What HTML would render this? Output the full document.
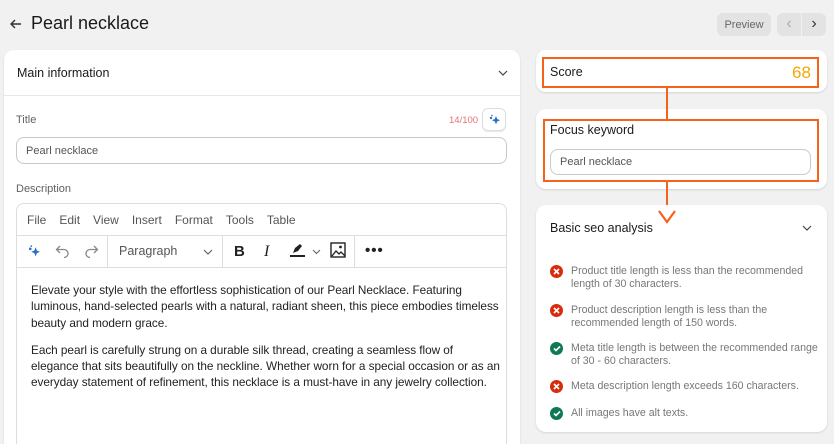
<!DOCTYPE html>
<html style="width:834px;height:444px;overflow:hidden"><head><style>
*{box-sizing:border-box;margin:0;padding:0}
body{width:834px;height:444px;overflow:hidden;background:#f1f1f1;font-family:"Liberation Sans",Arial,sans-serif;color:#303030;position:relative}
.abs{position:absolute}
.card{position:absolute;background:#fff;border-radius:10px;box-shadow:0 1px 2px rgba(0,0,0,.12)}
.lbl{font-size:11px;color:#616161}
.inp{position:absolute;border:1px solid #c9c9c9;border-radius:8px;font-size:11px;color:#555;padding-left:9px;display:flex;align-items:center}
.menu span{margin-right:13px}
.li{position:absolute;left:14px;display:flex;font-size:10.6px;color:#777;line-height:13px;white-space:nowrap}
.ic{width:13px;height:13px;border-radius:50%;flex:none;margin-right:8px;display:flex;align-items:center;justify-content:center}
.x{background:#d72c0d}.ok{background:#0e7a52}
</style></head><body>
<svg class="abs" style="left:9px;top:17px" width="14" height="14" viewBox="0 0 14 14"><path d="M12 7H2M6 3L2 7l4 4" stroke="#303030" stroke-width="1.4" fill="none"/></svg>
<div class="abs" style="left:31px;top:13px;font-size:18px;color:#1a1a1a">Pearl necklace</div>
<div class="abs" style="left:717px;top:13px;width:54px;height:23px;background:#e3e3e3;border-radius:6px;font-size:11px;color:#666;display:flex;align-items:center;justify-content:center">Preview</div>
<div class="abs" style="left:777px;top:13px;width:24px;height:23px;background:#e3e3e3;border-radius:6px 0 0 6px;color:#aaa;font-size:16px;text-align:center;line-height:21px">‹</div>
<div class="abs" style="left:802px;top:13px;width:24px;height:23px;background:#e3e3e3;border-radius:0 6px 6px 0;color:#333;font-size:16px;text-align:center;line-height:21px">›</div>

<div class="card" style="left:4px;top:50px;width:516px;height:394px;overflow:hidden;border-radius:10px 10px 0 0">
 <div class="abs" style="left:13px;top:16px;font-size:12.5px;color:#1a1a1a">Main information</div>
 <svg class="abs" style="left:494px;top:20px" width="10" height="6"><path d="M1 1l4 4 4-4" stroke="#444" fill="none" stroke-width="1.2"/></svg>
 <div class="abs" style="left:0;top:45px;width:516px;height:1px;background:#e8e8e8"></div>
 <div class="abs lbl" style="left:12px;top:64px">Title</div>
 <div class="abs" style="left:445px;top:65px;font-size:9.5px;color:#e57373">14/100</div>
 <div class="abs" style="left:478px;top:58px;width:24px;height:23px;border:1px solid #ddd;border-radius:6px;box-shadow:0 1px 1px rgba(0,0,0,.1)"><svg style="position:absolute;left:5px;top:5px" width="13" height="13" viewBox="0 0 13 13"><path d="M8 2l1.2 3L12 6.3 9.2 7.5 8 10.5 6.8 7.5 4 6.3 6.8 5z" fill="#2c6ecb"/><circle cx="3" cy="4" r="1.2" fill="#2c6ecb"/><circle cx="4" cy="1.5" r=".8" fill="#2c6ecb"/></svg></div>
 <div class="inp" style="left:12px;top:87px;width:491px;height:27px">Pearl necklace</div>
 <div class="abs lbl" style="left:12px;top:133px">Description</div>
 <div class="abs" style="left:12px;top:153px;width:491px;height:300px;border:1px solid #ddd;border-radius:8px">
  <div class="abs menu" style="left:10px;top:9px;font-size:12px;color:#555"><span>File</span><span>Edit</span><span>View</span><span>Insert</span><span>Format</span><span>Tools</span><span>Table</span></div>
  <div class="abs" style="left:0;top:31px;width:489px;height:1px;background:#ddd"></div>
  <div class="abs" style="left:0;top:63px;width:489px;height:1px;background:#ddd"></div>
  <div class="abs" style="left:90px;top:32px;width:1px;height:31px;background:#ddd"></div>
  <div class="abs" style="left:205px;top:32px;width:1px;height:31px;background:#ddd"></div>
  <div class="abs" style="left:337px;top:32px;width:1px;height:31px;background:#ddd"></div>
  <svg class="abs" style="left:10px;top:40px" width="14" height="14" viewBox="0 0 13 13"><path d="M8 3l1.2 3L12 7.3 9.2 8.5 8 11.5 6.8 8.5 4 7.3 6.8 6z" fill="#2c6ecb"/><circle cx="3" cy="4.5" r="1.2" fill="#2c6ecb"/><circle cx="4" cy="2" r=".8" fill="#2c6ecb"/></svg>
  <svg class="abs" style="left:38px;top:40px" width="16" height="16" viewBox="0 0 16 16"><path d="M5 2L1.5 5.5 5 9M1.5 5.5H9a4 4 0 010 8" stroke="#888" stroke-width="1.3" fill="none"/></svg>
  <svg class="abs" style="left:66px;top:40px" width="16" height="16" viewBox="0 0 16 16"><path d="M11 2l3.5 3.5L11 9M14.5 5.5H7a4 4 0 000 8" stroke="#888" stroke-width="1.3" fill="none"/></svg>
  <div class="abs" style="left:102px;top:40px;font-size:12.5px;color:#555">Paragraph</div>
  <svg class="abs" style="left:186px;top:45px" width="10" height="6"><path d="M1 1l4 4 4-4" stroke="#666" fill="none" stroke-width="1.2"/></svg>
  <div class="abs" style="left:217px;top:39px;font-size:15px;font-weight:bold;color:#222">B</div>
  <div class="abs" style="left:247px;top:39px;font-size:16px;font-style:italic;font-family:'Liberation Serif',serif;color:#222">I</div>
  <svg class="abs" style="left:272px;top:38px" width="16" height="16" viewBox="0 0 16 16"><path d="M4 11l2-5 5-4 2 2-4 5z" fill="#222"/><rect x="1" y="13" width="15" height="2" fill="#222"/></svg>
  <svg class="abs" style="left:295px;top:45px" width="9" height="6"><path d="M1 1l3.5 3.5L8 1" stroke="#666" fill="none" stroke-width="1.1"/></svg>
  <svg class="abs" style="left:313px;top:38px" width="16" height="16" viewBox="0 0 16 16"><rect x="1" y="1" width="14" height="14" fill="none" stroke="#222" stroke-width="1.4"/><path d="M2 14l4-5 3 3 2-2 4 4" stroke="#222" fill="none" stroke-width="1.3"/><circle cx="10.5" cy="5" r="1.4" fill="#222"/></svg>
  <div class="abs" style="left:348px;top:41px;font-size:15px;font-weight:bold;color:#222;letter-spacing:1px;line-height:12px">•••</div>
  <div class="abs" style="left:14px;top:78px;width:470px;font-size:11.8px;line-height:16.3px;color:#222;letter-spacing:-0.05px">
   <p style="margin-bottom:11px">Elevate your style with the effortless sophistication of our Pearl Necklace. Featuring luminous, hand-selected pearls with a natural, radiant sheen, this piece embodies timeless beauty and modern grace.</p>
   <p>Each pearl is carefully strung on a durable silk thread, creating a seamless flow of elegance that sits beautifully on the neckline. Whether worn for a special occasion or as an everyday statement of refinement, this necklace is a must-have in any jewelry collection.</p>
  </div>
 </div>
</div>

<div class="card" style="left:536px;top:50px;width:291px;height:42px"></div>
<div class="abs" style="left:542px;top:57px;width:277px;height:31px;border:2px solid #f5631b"></div>
<div class="abs" style="left:550px;top:65px;font-size:12.5px;color:#1a1a1a">Score</div>
<div class="abs" style="left:792px;top:63px;font-size:17px;color:#f5a800">68</div>

<div class="card" style="left:536px;top:109px;width:291px;height:80px"></div>
<div class="abs" style="left:543px;top:119px;width:276px;height:63px;border:2px solid #f5631b"></div>
<div class="abs" style="left:550px;top:123px;font-size:12.5px;color:#1a1a1a">Focus keyword</div>
<div class="inp" style="left:550px;top:149px;width:261px;height:26px;background:#fff">Pearl necklace</div>

<div class="abs" style="left:666px;top:88px;width:2px;height:31px;background:#f5631b"></div>
<div class="abs" style="left:666px;top:182px;width:2px;height:42px;background:#f5631b"></div>

<div class="card" style="left:536px;top:205px;width:291px;height:227px">
 <div class="abs" style="left:14px;top:16px;font-size:12.5px;color:#1a1a1a">Basic seo analysis</div>
 <svg class="abs" style="left:266px;top:20px" width="10" height="6"><path d="M1 1l4 4 4-4" stroke="#444" fill="none" stroke-width="1.2"/></svg>
 <div class="li" style="top:60px"><div class="ic x"><svg width="7" height="7"><path d="M1 1l5 5M6 1L1 6" stroke="#fff" stroke-width="1.6"/></svg></div><div>Product title length is less than the recommended<br>length of 30 characters.</div></div>
 <div class="li" style="top:99px"><div class="ic x"><svg width="7" height="7"><path d="M1 1l5 5M6 1L1 6" stroke="#fff" stroke-width="1.6"/></svg></div><div>Product description length is less than the<br>recommended length of 150 words.</div></div>
 <div class="li" style="top:137px"><div class="ic ok"><svg width="8" height="7"><path d="M1 3.5l2 2 4-4" stroke="#fff" stroke-width="1.6" fill="none"/></svg></div><div>Meta title length is between the recommended range<br>of 30 - 60 characters.</div></div>
 <div class="li" style="top:175px"><div class="ic x"><svg width="7" height="7"><path d="M1 1l5 5M6 1L1 6" stroke="#fff" stroke-width="1.6"/></svg></div><div>Meta description length exceeds 160 characters.</div></div>
 <div class="li" style="top:202px"><div class="ic ok"><svg width="8" height="7"><path d="M1 3.5l2 2 4-4" stroke="#fff" stroke-width="1.6" fill="none"/></svg></div><div>All images have alt texts.</div></div>
</div>
<svg class="abs" style="left:657px;top:208px" width="20" height="18"><path d="M2 3l8 11 8-11" stroke="#f5631b" stroke-width="2.2" fill="none"/></svg>
</body></html>
